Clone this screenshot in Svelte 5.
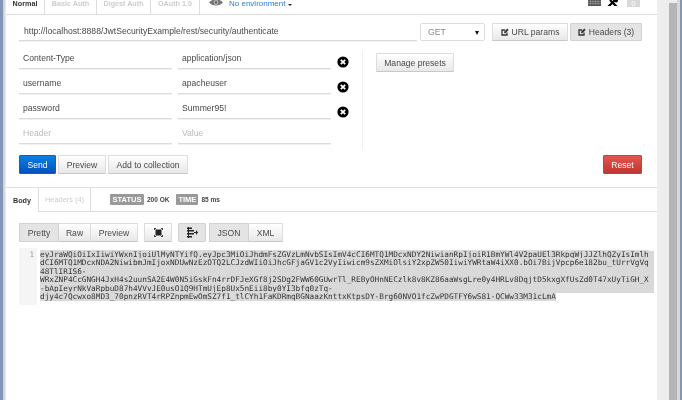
<script>
    const headers = [
        { key: "Content-Type", value: "application/json" },
        { key: "username", value: "apacheuser" },
        { key: "password", value: "Summer95!" }
    ];

    const tokenLines = [
        "eyJraWQiOiIxIiwiYWxnIjoiUlMyNTYifQ.eyJpc3MiOiJhdmFsZGVzLmNvbSIsImV4cCI6MTQ1MDcxNDY2NiwianRpIjoiR1BmYWl4V2paUEl3RkpqWjJJZlhQZyIsImlh",
        "dCI6MTQ1MDcxNDA2NiwibmJmIjoxNDUwNzEzOTQ2LCJzdWIiOiJhcGFjaGV1c2VyIiwicm9sZXMiOlsiY2xpZW50IiwiYWRtaW4iXX0.bOi7BijVpcp6e182bu_tUrrVgVq",
        "48TlIRIS6-",
        "WRxZNP4CcGNGH4JxH4s2uunSA2E4W0N5iGskFn4rrDFJeXGf8j2SDg2FWW60GUwrTl_REByOHnNECzlk8v8KZ86aaWsgLre0y4HRLv8DqjtD5kxgXfUsZd0T47xUyTiGH_X",
        "-bApIeyrNkVaRpbuD87h4VVvJE0usO1Q9HTmUjEp8Ux5nEii8by0YI3bfq0zTq-",
        "djy4c7Qcwxo8MD3_70pnzRVT4rRPZnpmEwOmSZ7f1_tlCYh1FaKDRmqBGNaazKnttxKtpsDY-Brg60NVO1fcZwPDGTFY6wS81-QCWw33M31cLmA"
    ];
</script>

<div class="window">
    <div class="edge-left"></div>

    <main>
        <nav class="top-tabs">
            <span class="tab tab-normal active">Normal</span>
            <span class="tab tab-basic">Basic Auth</span>
            <span class="tab tab-digest">Digest Auth</span>
            <span class="tab tab-oauth">OAuth 1.0</span>
            <svg class="eye" viewBox="0 0 14 8" width="14" height="8">
                <path d="M0 3.5C3-0.5 11-0.5 14 3.5C11 7.5 3 7.5 0 3.5Z" fill="#777" />
                <circle cx="7" cy="3.5" r="2.2" fill="#ccc" />
                <circle cx="7" cy="3.5" r="1.2" fill="#555" />
            </svg>
            <span class="env">No environment</span>
            <span class="env-caret"></span>
            <span class="top-tools">
                <svg viewBox="0 0 13 6" width="13" height="6">
                    <rect width="13" height="6" fill="#555" />
                    <path d="M0 1.5H13M0 3.5H13M2.5 0V5M5 0V5M7.5 0V5M10 0V5" stroke="#aaa" stroke-width="0.5" />
                </svg>
                <svg class="wrench" viewBox="0 0 11 6" width="11" height="6">
                    <path d="M1 7L8 0M3 0L10 7" stroke="#000" stroke-width="2.2" />
                    <circle cx="9" cy="0.5" r="2" fill="#000" />
                </svg>
                <span class="count">0</span>
            </span>
        </nav>

        <div class="url-row">
            <div class="field url">http://localhost:8888/JwtSecurityExample/rest/security/authenticate</div>
            <div class="select">GET<span class="select-caret"></span></div>
            <button class="btn url-params">
                <svg class="edit" viewBox="0 0 8 8" width="8" height="8">
                    <path d="M6 4.5V7H1V2H4" fill="none" stroke="#333" stroke-width="1.3" />
                    <path d="M3 5.2L3.3 3.6L6.3 0.6L7.6 1.9L4.6 4.9Z" fill="#333" />
                </svg>
                URL params
            </button>
            <button class="btn pressed headers-btn">
                <svg class="edit" viewBox="0 0 8 8" width="8" height="8">
                    <path d="M6 4.5V7H1V2H4" fill="none" stroke="#333" stroke-width="1.3" />
                    <path d="M3 5.2L3.3 3.6L6.3 0.6L7.6 1.9L4.6 4.9Z" fill="#333" />
                </svg>
                Headers (3)
            </button>
        </div>

        <div class="editor">
            <div class="header-rows">
                {#each headers as header}
                    <div class="header-row">
                        <div class="field key">{header.key}</div>
                        <div class="field value">{header.value}</div>
                        <svg class="delete" viewBox="0 0 12 12" width="12" height="12">
                            <circle cx="6" cy="6" r="5.6" fill="#000" />
                            <path d="M3.8 3.8L8.2 8.2M8.2 3.8L3.8 8.2" stroke="#fff" stroke-width="1.8" />
                        </svg>
                    </div>
                {/each}
                <div class="header-row">
                    <div class="field key placeholder">Header</div>
                    <div class="field value placeholder">Value</div>
                </div>
            </div>
            <div class="presets">
                <button class="btn manage">Manage presets</button>
            </div>
        </div>

        <div class="actions">
            <button class="btn send">Send</button>
            <button class="btn preview">Preview</button>
            <button class="btn collection">Add to collection</button>
            <button class="btn reset">Reset</button>
        </div>

        <div class="response-bar">
            <span class="tab res-body active">Body</span>
            <span class="tab res-headers">Headers (4)</span>
            <span class="badge status">STATUS</span>
            <span class="metric ok">200 OK</span>
            <span class="badge time">TIME</span>
            <span class="metric">85 ms</span>
        </div>

        <div class="view-row">
            <div class="group">
                <button class="btn seg pretty pressed">Pretty</button>
                <button class="btn seg raw">Raw</button>
                <button class="btn seg seg-preview">Preview</button>
            </div>
            <button class="btn icon-btn first-icon">
                <svg viewBox="0 0 9 9" width="9" height="9">
                    <rect x="1.5" y="1.5" width="6" height="6" fill="#222" />
                    <path d="M0 0H2V1H1V2H0ZM9 0V2H8V1H7V0ZM0 9V7H1V8H2V9ZM9 9H7V8H8V7H9Z" fill="#444" />
                </svg>
            </button>
            <button class="btn icon-btn pressed second-icon">
                <svg viewBox="0 0 11 11" width="11" height="11">
                    <path d="M0 .5H5V2H0ZM0 3H7V4.500H0ZM0 6H7V7.500H0ZM0 9H5V10.500H0Z" fill="#222" />
                    <path d="M1 0H2V11H1Z" fill="#222" />
                    <path d="M7 5H9V3L11 5.500L9 8V6H7Z" fill="#222" />
                </svg>
            </button>
            <div class="group">
                <button class="btn seg json pressed">JSON</button>
                <button class="btn seg xml">XML</button>
            </div>
        </div>

        <div class="code">
            <div class="gutter">1</div>
            <pre>{#each tokenLines as line}<span class="line"><span class="sel">{line}</span></span>{/each}</pre>
        </div>
    </main>

    <aside class="scroll">
        <div class="thumb"></div>
        <div class="edge-right"></div>
    </aside>
</div>

<style>
    :global(body) {
        margin: 0;
    }

    .window {
        display: flex;
        width: 682px;
        height: 400px;
        overflow: hidden;
        background: #fff;
        font-family: "Liberation Sans", Arial, sans-serif;
        font-size: 8.6px;
        color: #484848;
        filter: blur(0.3px);
    }

    .edge-left {
        width: 6px;
        flex: none;
        background: linear-gradient(to right, #8496b8 0, #8496b8 3px, #c9cbd2 3px, #eeeeee 6px);
    }

    main {
        width: 651px;
        flex: none;
    }

    /* top tab strip, cut off by the window edge */
    .top-tabs {
        display: flex;
        align-items: flex-end;
        height: 14px;
        border-bottom: 1px solid #ddd;
        overflow: hidden;
    }

    .tab {
        display: flex;
        align-items: flex-end;
        justify-content: center;
        height: 14px;
        box-sizing: border-box;
        color: #ccc;
        font-weight: bold;
        font-size: 7.2px;
        border-right: 1px solid #ddd;
        white-space: nowrap;
    }

    .top-tabs .tab {
        padding-bottom: 6px;
    }

    .tab.active {
        color: #333;
        position: relative;
    }

    .tab-normal {
        width: 39px;
        height: 15px;
        margin-bottom: -1px;
        background: #fff;
        padding-bottom: 7px !important;
    }

    .tab-basic {
        width: 52px;
    }

    .tab-digest {
        width: 54px;
    }

    .tab-oauth {
        width: 49px;
    }

    .eye {
        margin: 0 6px 7px 9px;
    }

    .env {
        color: #2a7ed0;
        font-size: 8px;
        padding-bottom: 5px;
        line-height: 10px;
    }

    .env-caret {
        width: 0;
        height: 0;
        margin: 0 0 8px 3px;
        border: 2.5px solid transparent;
        border-top-color: #222;
        border-bottom: 0;
    }

    .top-tools {
        display: flex;
        align-items: flex-start;
        align-self: flex-start;
        margin-left: auto;
        margin-right: 17px;
    }

    .wrench {
        margin-left: 6px;
    }

    .count {
        width: 13px;
        height: 7px;
        margin-left: 9px;
        background: #d8d8d8;
        color: #fff;
        font-size: 8px;
        line-height: 7px;
        text-align: center;
    }

    .url-row {
        display: flex;
        align-items: flex-start;
        margin: 8px 0 0 13px;
    }

    .field {
        height: 19px;
        box-sizing: border-box;
        padding: 0 0 1px 4px;
        line-height: 17px;
        border-bottom: 1px solid #dcdcdc;
        box-shadow: 0 1px 0 #f0f0f0;
        white-space: nowrap;
    }

    .url {
        width: 398px;
        height: 18px;
        padding-left: 5px;
    }

    .select {
        position: relative;
        width: 65px;
        height: 18px;
        margin-left: 3px;
        box-sizing: border-box;
        padding-left: 7px;
        line-height: 17px;
        color: #888;
        border: 1px solid #ddd;
        border-radius: 2px;
    }

    .select-caret {
        position: absolute;
        right: 5px;
        top: 7px;
        border: 2.5px solid transparent;
        border-top: 4px solid #111;
        border-bottom: 0;
    }

    .btn {
        display: flex;
        align-items: center;
        justify-content: center;
        height: 19px;
        box-sizing: border-box;
        padding: 0;
        font: inherit;
        color: #484848;
        background: linear-gradient(#fff, #e8e8e8);
        border: 1px solid #ddd;
        border-bottom-color: #c8c8c8;
        border-radius: 1px;
        white-space: nowrap;
    }

    .btn.pressed {
        background: #e4e4e4;
        border-color: #d2d2d2;
    }

    .edit {
        margin-right: 3px;
    }

    .url-params {
        width: 76px;
        height: 18px;
        margin-left: 7px;
    }

    .headers-btn {
        width: 72px;
        height: 18px;
        margin-left: 2px;
    }

    .editor {
        display: flex;
        height: 100px;
        margin: 9px 0 0 13px;
    }

    .header-rows {
        width: 343px;
        border-right: 1px solid #efefef;
    }

    .header-row {
        display: flex;
        height: 19px;
        margin-bottom: 6px;
    }

    .key,
    .value {
        width: 153px;
        padding-left: 4px;
    }

    .value {
        margin-left: 6px;
    }

    .placeholder {
        color: #bbb;
    }

    .delete {
        margin: 6px 0 0 6px;
    }

    .presets {
        padding: 3px 0 0 13px;
    }

    .manage {
        width: 78px;
    }

    .actions {
        display: flex;
        margin: 5px 15px 0 13px;
    }

    .send {
        width: 37px;
        color: #fff;
        background: linear-gradient(#0a80e2, #0450c0);
        border-color: #0a60c8;
    }

    .preview {
        width: 48px;
        margin-left: 2px;
    }

    .collection {
        width: 80px;
        margin-left: 2px;
    }

    .reset {
        width: 39px;
        margin-left: auto;
        color: #fff;
        background: linear-gradient(#e85550, #bd362f);
        border-color: #c9403a;
    }

    .response-bar {
        display: flex;
        align-items: center;
        height: 23px;
        margin-top: 13px;
        box-sizing: content-box;
        border-top: 1px solid #ddd;
        border-bottom: 1px solid #ddd;
    }

    .response-bar .tab {
        align-items: center;
        height: 23px;
    }

    .res-body {
        width: 33px;
        height: 24px !important;
        margin-bottom: -1px;
        background: #fff;
    }

    .res-headers {
        width: 52px;
        font-weight: normal;
        font-size: 7.4px;
    }

    .badge {
        height: 11px;
        margin-bottom: 1px;
        border-radius: 1px;
        background: #999;
        color: #fff;
        font-size: 7.5px;
        font-weight: bold;
        line-height: 11px;
        text-align: center;
    }

    .status {
        width: 34px;
        margin-left: 19px;
    }

    .time {
        width: 22px;
        margin-left: 7px;
    }

    .metric {
        margin: 0 0 1px 3px;
        color: #444;
        font-size: 6.5px;
        font-weight: bold;
    }

    .view-row {
        display: flex;
        margin: 11px 0 0 13px;
    }

    .group {
        display: flex;
    }

    .seg {
        border-radius: 0;
    }

    .seg + .seg {
        border-left: 0;
    }

    .pretty {
        width: 40px;
    }

    .raw {
        width: 32px;
    }

    .seg-preview {
        width: 47px;
    }

    .icon-btn {
        width: 28px;
    }

    .first-icon {
        margin-left: 6px;
    }

    .second-icon {
        margin: 0 3px 0 6px;
    }

    .json {
        width: 40px;
    }

    .xml {
        width: 34px;
    }

    .code {
        display: flex;
        margin: 6px 0 0 13px;
    }

    .gutter {
        width: 18px;
        height: 57px;
        box-sizing: border-box;
        padding: 3px 3px 0 0;
        background: #f5f5f5;
        color: #999;
        font-family: "DejaVu Sans Mono", monospace;
        font-size: 7.6px;
        line-height: 8.4px;
        text-align: right;
    }

    pre {
        margin: 3px 0 0 3px;
        color: #333;
        font-family: "DejaVu Sans Mono", monospace;
        font-size: 7.73px;
        line-height: 8.4px;
    }

    .line {
        display: block;
    }

    .sel {
        background: #d9d9d9;
    }

    .line:not(:last-child) {
        width: 614px;
        background: #d9d9d9;
    }

    .scroll {
        display: flex;
        flex: 1;
        padding-left: 12px;
        background: #eeeeee;
    }

    .thumb {
        width: 8px;
        margin-top: 3px;
        background: #b5b5b5;
    }

    .edge-right {
        flex: 1;
        background: linear-gradient(to right, #d8d8d8 0, #d8d8d8 3px, #8496b8 3px);
    }
</style>
